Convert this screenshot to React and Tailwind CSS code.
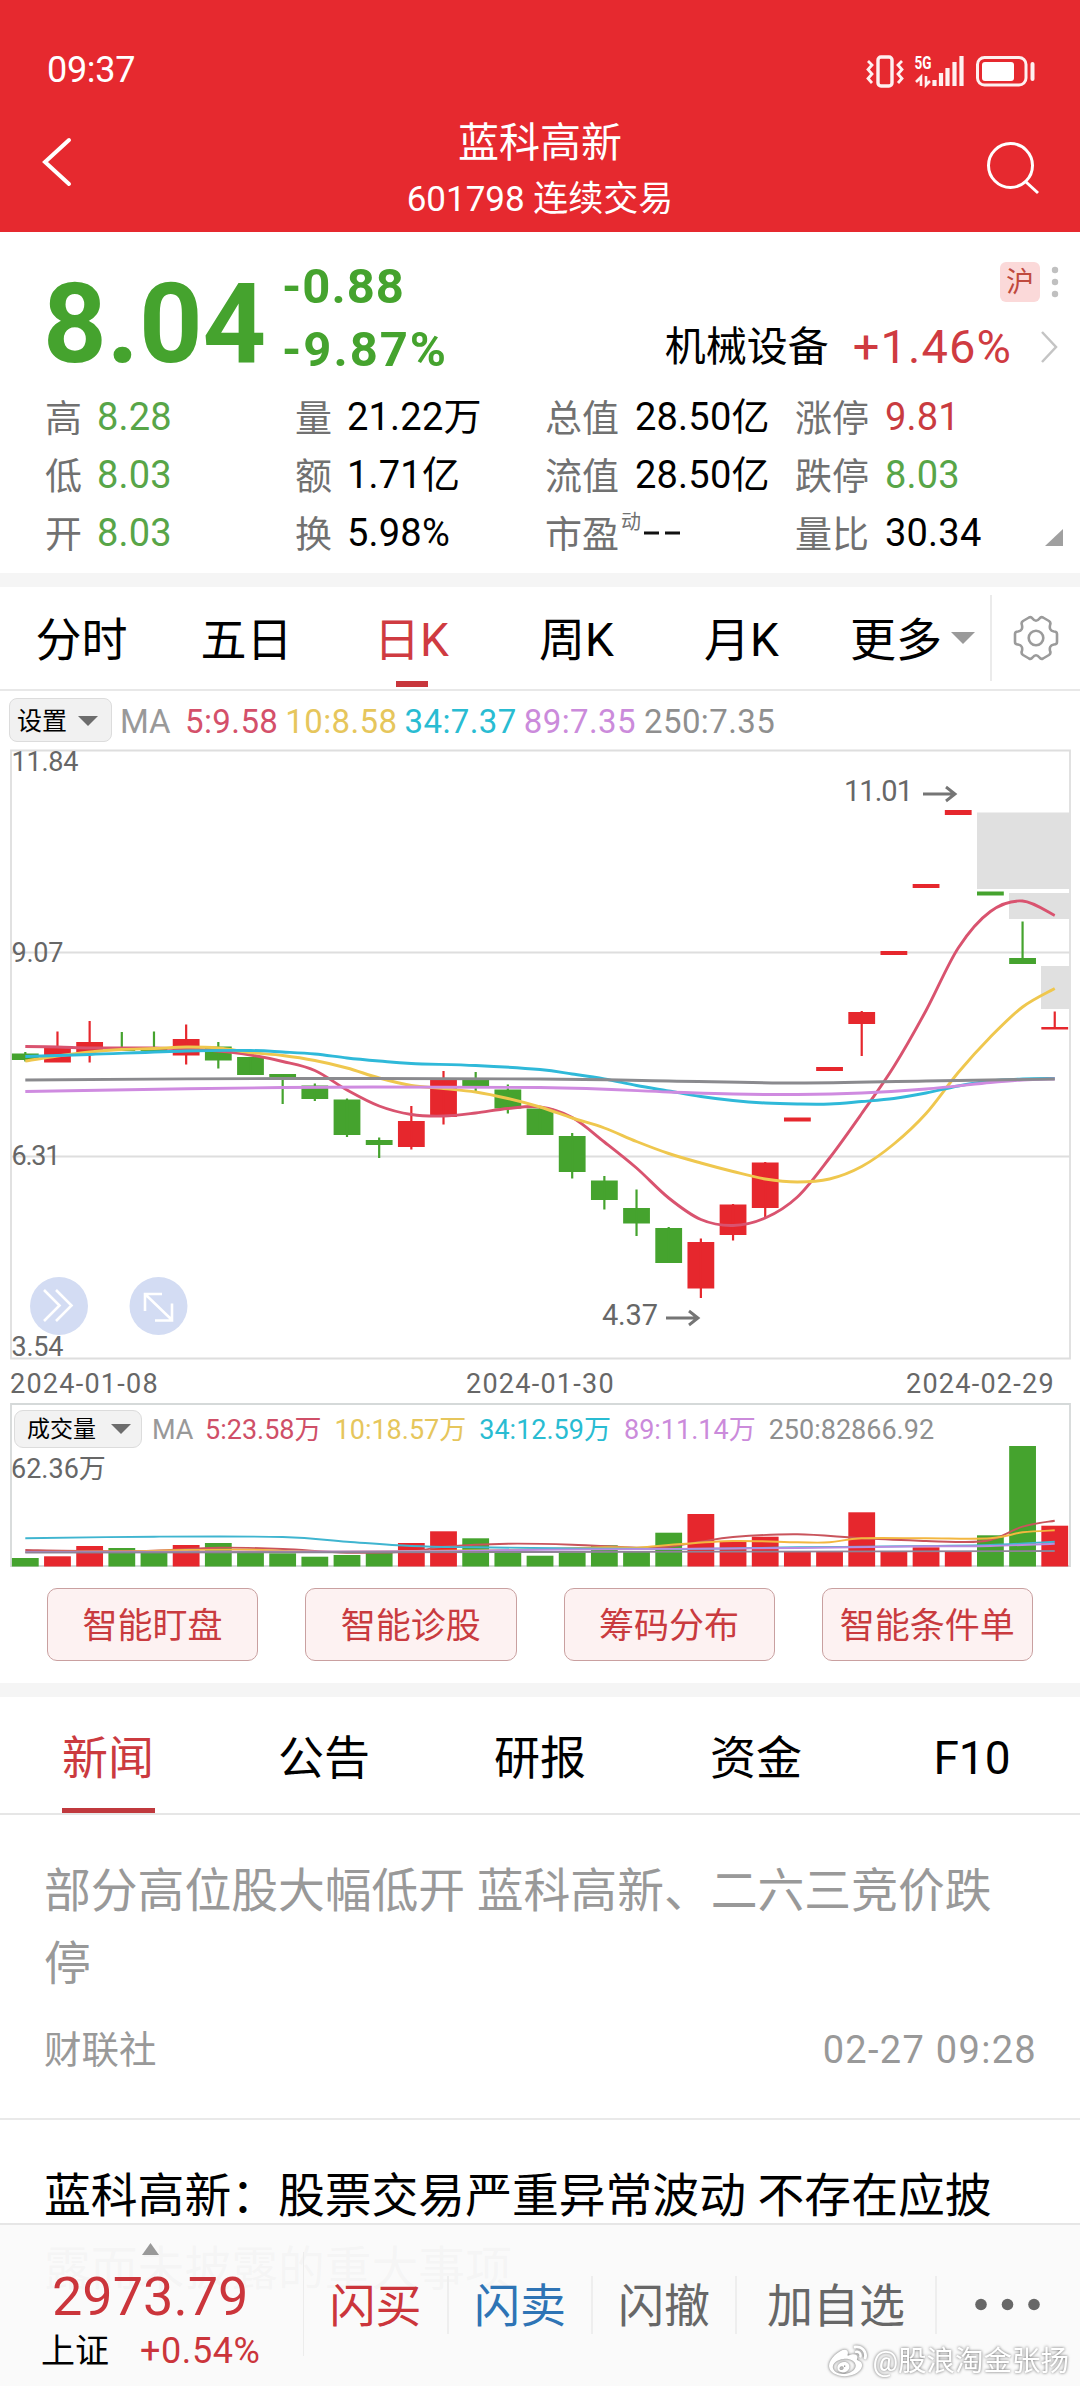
import React, { useState } from 'react';
import { FaWeibo } from 'react-icons/fa';

const RED = '#e6272d';
const GREEN = '#45a32e';
const FONT = 'font-[Roboto,"Noto_Sans_CJK_SC",sans-serif]';

// t: r = sube, g = baja; o/c = cuerpo, h/l = mecha, v = tope de la barra de volumen
const velas = [
  { t: 'g', o: 1053.5, c: 1060, h: 1052, l: 1061.5, v: 1558 },
  { t: 'r', o: 1047, c: 1062.5, h: 1031.5, l: 1062, v: 1556.3 },
  { t: 'r', o: 1042, c: 1052, h: 1021, l: 1062.5, v: 1546 },
  { t: 'g', o: 1048.5, c: 1051, h: 1032, l: 1050, v: 1548 },
  { t: 'g', o: 1048.5, c: 1051, h: 1031.5, l: 1050, v: 1552 },
  { t: 'r', o: 1039, c: 1055.5, h: 1024.5, l: 1064.5, v: 1545 },
  { t: 'g', o: 1046.5, c: 1060.5, h: 1042, l: 1068.5, v: 1543 },
  { t: 'g', o: 1057, c: 1075, h: 1057, l: 1075, v: 1552 },
  { t: 'g', o: 1074, c: 1077.5, h: 1074, l: 1104, v: 1553.3 },
  { t: 'g', o: 1085.5, c: 1099, h: 1083.5, l: 1101, v: 1556.7 },
  { t: 'g', o: 1099.5, c: 1135, h: 1098.5, l: 1137, v: 1555 },
  { t: 'g', o: 1140, c: 1145, h: 1137.5, l: 1158, v: 1552.7 },
  { t: 'r', o: 1121, c: 1147, h: 1106, l: 1149.5, v: 1543 },
  { t: 'r', o: 1079, c: 1117, h: 1071, l: 1124.5, v: 1531.3 },
  { t: 'g', o: 1079, c: 1086, h: 1072, l: 1091, v: 1538.3 },
  { t: 'g', o: 1089.5, c: 1108.5, h: 1084.5, l: 1113.5, v: 1551.3 },
  { t: 'g', o: 1108.5, c: 1135, h: 1108, l: 1135, v: 1555.7 },
  { t: 'g', o: 1136, c: 1172, h: 1133, l: 1178.5, v: 1552.3 },
  { t: 'g', o: 1180.5, c: 1200, h: 1176, l: 1209.5, v: 1545.3 },
  { t: 'g', o: 1208, c: 1223.5, h: 1189.5, l: 1236, v: 1551.7 },
  { t: 'g', o: 1228, c: 1263, h: 1227, l: 1263, v: 1532.7 },
  { t: 'r', o: 1242, c: 1288.5, h: 1238.5, l: 1298, v: 1514 },
  { t: 'r', o: 1204.5, c: 1235, h: 1204, l: 1240.5, v: 1541 },
  { t: 'r', o: 1162.5, c: 1208, h: 1162, l: 1217.5, v: 1536.7 },
  { t: 'r', o: 1117.5, c: 1121.5, h: 1118, l: 1121, v: 1551 },
  { t: 'r', o: 1067, c: 1071, h: 1067, l: 1071, v: 1551.7 },
  { t: 'r', o: 1012, c: 1024, h: 1011, l: 1056, v: 1512.3 },
  { t: 'r', o: 951, c: 955, h: 951, l: 955, v: 1551.7 },
  { t: 'r', o: 884, c: 888, h: 884, l: 888, v: 1547.3 },
  { t: 'r', o: 810, c: 815, h: 810, l: 815, v: 1551.7 },
  { t: 'g', o: 891.5, c: 895.5, h: 892, l: 895, v: 1535.3 },
  { t: 'g', o: 958, c: 964, h: 921.5, l: 964, v: 1446 },
  { t: 'r', o: 1027, c: 1029.5, h: 1011.5, l: 1029, v: 1525.7 },
];

const serie = (ys) => ys.map((y, i) => [i, y]);

const lineasPrecio = [
  { color: '#d9536f', pts: serie([1046.5, 1047, 1048, 1048, 1048, 1049, 1051, 1055, 1061.5, 1070.5, 1090, 1106, 1114.5, 1116, 1113, 1108.5, 1107, 1117.5, 1142, 1168, 1198, 1219.5, 1225.5, 1218, 1197, 1158, 1113.5, 1066.5, 1010.5, 948, 911.5, 901, 915.5]) },
  { color: '#efc74e', pts: serie([1061, 1056, 1052, 1049.5, 1048.5, 1047, 1048, 1052.5, 1055.5, 1060.5, 1068, 1078, 1085.5, 1088.5, 1092, 1098.5, 1107, 1118, 1128, 1141.5, 1153.5, 1163, 1171.5, 1179, 1182, 1179, 1166.5, 1144, 1113.5, 1072.5, 1037, 1007, 988.5]) },
  { color: '#2fb9d9', pts: [[0, 1056.5], [2, 1054.5], [5, 1051], [7, 1050.5], [8, 1052], [9, 1054], [10, 1058], [11, 1061], [12, 1063.5], [14, 1065.5], [16, 1069.5], [17, 1074], [18, 1079], [19, 1085.5], [20, 1091], [21, 1096.5], [22, 1100.5], [23, 1103], [24, 1104], [25, 1104], [26, 1101.5], [27, 1098.5], [28, 1093], [29, 1086], [30, 1081], [31, 1079], [32, 1078.5]] },
  { color: '#cf8be0', pts: [[0, 1091.5], [8, 1087.5], [16, 1087.5], [20, 1092], [22, 1094], [24, 1094.5], [26, 1093], [28, 1089], [30, 1082.5], [31, 1080], [32, 1079]] },
  { color: '#8a8a8e', pts: [[0, 1080], [8, 1078.5], [16, 1079], [20, 1081], [24, 1083], [28, 1081], [32, 1079]] },
];

const lineasVolumen = [
  { color: '#c9545c', pts: [[0, 1550], [2, 1551], [4, 1550.7], [6, 1547.7], [8, 1549], [10, 1552.7], [12, 1551.5], [13, 1546.7], [15, 1543.7], [17, 1544.7], [19, 1547.7], [20, 1546.7], [21, 1541.7], [22, 1537], [24, 1534.3], [26, 1538.3], [28, 1541], [29, 1542], [30, 1540], [31, 1526.7], [32, 1520.7]] },
  { color: '#f3b740', pts: [[0, 1552], [3, 1551.5], [5, 1550], [7, 1549.7], [9, 1551.7], [13, 1550.7], [15, 1550], [18, 1547.3], [19, 1547.7], [20, 1545], [22, 1541], [24, 1542.3], [25, 1542.3], [26, 1538.3], [28, 1538.3], [30, 1538.3], [31, 1532.3], [32, 1530.3]] },
  { color: '#3fb5d0', pts: [[0, 1538.3], [4, 1536.7], [8, 1537], [10, 1541.7], [12, 1546], [14, 1547.3], [20, 1549], [24, 1547.3], [28, 1546], [30, 1545], [32, 1541.7]] },
  { color: '#b98be0', pts: [[0, 1552], [12, 1551.3], [16, 1549.7], [24, 1548], [28, 1546.3], [30, 1546], [32, 1543.7]] },
  { color: '#8f8296', pts: [[0, 1552.5], [16, 1552], [32, 1551]] },
];

const px = (i) => 25.3 + i * 32.17;

// Curva suave que pasa por todos los puntos
function curva(pts) {
  const p = pts.map(([i, y]) => [px(i), y]);
  let d = `M${p[0][0]},${p[0][1]}`;
  for (let i = 0; i < p.length - 1; i++) {
    const a = p[i - 1] || p[i];
    const b = p[i];
    const c = p[i + 1];
    const e = p[i + 2] || c;
    d += `C${b[0] + (c[0] - a[0]) / 6},${b[1] + (c[1] - a[1]) / 6} ${c[0] - (e[0] - b[0]) / 6},${c[1] - (e[1] - b[1]) / 6} ${c[0]},${c[1]}`;
  }
  return d;
}

const datos = [
  [['高', '8.28', 'text-[#58a548]'], ['量', '21.22万', 'text-black'], ['总值', '28.50亿', 'text-black'], ['涨停', '9.81', 'text-[#c93b40]']],
  [['低', '8.03', 'text-[#58a548]'], ['额', '1.71亿', 'text-black'], ['流值', '28.50亿', 'text-black'], ['跌停', '8.03', 'text-[#58a548]']],
  [['开', '8.03', 'text-[#58a548]'], ['换', '5.98%', 'text-black'], ['市盈', '--', 'text-black'], ['量比', '30.34', 'text-black']],
];

const medias = [
  ['5:9.58', 'text-[#d4506a] ml-[15px]'],
  ['10:8.58', 'text-[#e6c65c] ml-[7px]'],
  ['34:7.37', 'text-[#29bcd2] ml-[7px]'],
  ['89:7.35', 'text-[#cb8bdb] ml-[7px]'],
  ['250:7.35', 'text-[#8f8f8f] ml-[8px]'],
];

const mediasVolumen = [
  ['5:23.58万', 'text-[#cf4f68]'],
  ['10:18.57万', 'text-[#e6c65c]'],
  ['34:12.59万', 'text-[#29bcd2]'],
  ['89:11.14万', 'text-[#cb8bdb]'],
  ['250:82866.92', 'text-[#8f8f8f]'],
];

function BarraEstado() {
  return (
    <div className="flex h-[112px] items-end justify-between pl-[47px] pr-[44px] pb-[20px]">
      <span className="text-[36px] leading-[43px] tracking-[-0.3px]">09:37</span>
      <svg className="h-[40px] w-[170px]" viewBox="866 50 170 40" fill="none" stroke="#fff" strokeOpacity="0.93">
        <rect x="878" y="55" width="14" height="29" rx="3" strokeWidth="3.4" />
        <path d="M868 59l4 4-4 4.500 4 4.500-4 4.500 4 4.500M902 59l-4 4 4 4.500-4 4.500 4 4.500-4 4.500" strokeWidth="2.800" />
        <text x="914.500" y="67" fontSize="17.500" fontWeight="700" fill="#fff" stroke="none" textLength="17" lengthAdjust="spacingAndGlyphs">5G</text>
        <path d="M921 84V75l-5 5M926 74v9l4-4" strokeWidth="2.600" />
        <path d="M934.500 84v-6M941 84v-13M947.500 84v-18M954.500 84v-24M961.500 84v-30" strokeWidth="4.200" />
        <rect x="977.500" y="55.500" width="48.500" height="27.500" rx="7" strokeWidth="3" />
        <rect x="982" y="60" width="32" height="19" rx="3" fill="#fff" stroke="none" />
        <path d="M1032.500 62v15" strokeWidth="4" strokeLinecap="round" />
      </svg>
    </div>
  );
}

function Cabecera() {
  return (
    <header className="h-[232px] bg-[#e6292f] text-white">
      <BarraEstado />
      <div className="flex h-[120px] justify-between">
        <svg className="h-[60px] w-[40px] ml-[38px] mt-[19px]" viewBox="38 131 40 60" fill="none" stroke="#fff" strokeWidth="4">
          <path d="M69 140L45 162l24 22" strokeLinecap="round" />
        </svg>
        <div className="flex flex-col items-center ml-[18px]">
          <h1 className="mt-[6px] text-[41px] leading-[50px]">蓝科高新</h1>
          <p className="mt-[10px] text-[35px] leading-[44px]">601798 连续交易</p>
        </div>
        <svg className="h-[60px] w-[60px] mr-[36px] mt-[26px]" viewBox="984 138 60 60" fill="none" stroke="#fff" strokeWidth="3">
          <circle cx="1010.500" cy="165.500" r="22" />
          <path d="M1026 182l12 11" />
        </svg>
      </div>
    </header>
  );
}

function Cotizacion() {
  return (
    <section className="h-[341px] relative">
      <div className="flex h-[155px]">
        <div className="w-[236px] pl-[43px] pt-[37px] text-[111px] font-bold leading-[110px] text-[#45a32e]">8.04</div>
        <div className="pl-[46px] pt-[27px] text-[49px] font-bold text-[#45a32e]">
          <p className="leading-[56px] tracking-[1px]">-0.88</p>
          <p className="mt-[7px] leading-[56px] tracking-[2px]">-9.87%</p>
        </div>
        <div className="ml-auto flex flex-col items-end pr-[21px]">
          <div className="mt-[30px] flex items-center gap-[11px]">
            <span className="flex h-[40px] w-[40px] items-center justify-center rounded-[6px] bg-[#fbd9d9] pt-[2px] text-[28px] leading-none text-[#c04a3e]">沪</span>
            <svg className="h-[32px] w-[8px]" viewBox="0 0 8 32" fill="#c0c0c0">
              <circle cx="4" cy="4" r="3.200" />
              <circle cx="4" cy="16" r="3.200" />
              <circle cx="4" cy="28" r="3.200" />
            </svg>
          </div>
          <div className="mt-[17px] flex h-[56px] items-center">
            <span className="text-[41px] leading-[56px]">机械设备</span>
            <span className="ml-[24px] text-[47px] leading-[56px] tracking-[1.1px] text-[#cf3b41]">+1.46%</span>
            <svg className="ml-[27px] h-[34px] w-[20px]" viewBox="0 0 20 34" fill="none" stroke="#c4c4c4" strokeWidth="2.500">
              <path d="M3 2l14 15L3 32" />
            </svg>
          </div>
        </div>
      </div>
      <div className="flex flex-col pt-[2px]">
        {datos.map((fila, n) => (
          <div key={n} className="flex h-[58px] pl-[45px]">
            {fila.map(([nombre, valor, color], k) => (
              <div key={nombre} className="flex w-[250px] items-center whitespace-nowrap">
                <span className="mt-[4px] text-[37px] leading-[44px] text-[#717171]">{nombre}</span>
                {nombre === '市盈' ? (
                  <>
                    <span className="ml-[2px] mb-[24px] text-[20px] leading-none text-[#717171]">动</span>
                    <svg className="ml-[3px] mb-[2px] h-[4px] w-[36px]" viewBox="0 0 36 4">
                      <path d="M0 2h15M21 2h15" stroke="#111" strokeWidth="3" />
                    </svg>
                  </>
                ) : (
                  <span className={`mb-[3px] text-[38px] leading-[44px] tracking-[0.2px] ${color} ${k > 1 ? 'ml-[16px]' : 'ml-[15px]'}`}>{valor}</span>
                )}
              </div>
            ))}
          </div>
        ))}
      </div>
      <svg className="absolute right-[17px] bottom-[27px] h-[17px] w-[18px]" viewBox="0 0 18 17" fill="#a0a0a0">
        <path d="M18 0v17H0z" />
      </svg>
    </section>
  );
}

function Periodos() {
  const [activo, setActivo] = useState('日K');
  return (
    <nav className="flex h-[104px] border-b-2 border-[#e8e8e8]">
      {['分时', '五日', '日K', '周K', '月K'].map((p) => (
        <button
          key={p}
          onClick={() => setActivo(p)}
          className={`relative flex w-[165px] justify-center pt-[25px] pr-[2px] text-[46px] leading-[56px] ${activo === p ? 'text-[#cf3b41]' : 'text-black'}`}
        >
          {p}
          {activo === p && <span className="absolute bottom-[2px] h-[6px] w-[32px] bg-[#c8363c]" />}
        </button>
      ))}
      <button className="flex w-[165px] pl-[25px] pt-[25px] text-[46px] leading-[56px]">
        更多
        <svg className="ml-[9px] mt-[20px] h-[12px] w-[24px]" viewBox="0 0 24 12" fill="#9a9a9a">
          <path d="M0 0h24L12 12z" />
        </svg>
      </button>
      <div className="mt-[8px] flex h-[86px] flex-1 items-center justify-center border-l-2 border-[#ebebeb]">
        <svg className="h-[48px] w-[48px]" viewBox="-24 -24 48 48" fill="none" stroke="#9b9b9b" strokeWidth="2.600" strokeLinejoin="round">
          <path d="M-7-20.500Q-5-21.500-3.500-19.500Q0-15 3.500-19.500Q5-21.500 7-20.500L13-17Q15-15.500 14.200-13.500Q12.500-7.500 18-6.500Q21-6.500 21-4V4Q21 6.500 18 6.500Q12.500 7.500 14.200 13.500Q15 15.500 13 17L7 20.500Q5 21.500 3.500 19.500Q0 15-3.500 19.500Q-5 21.500-7 20.500L-13 17Q-15 15.500-14.200 13.500Q-12.500 7.500-18 6.500Q-21 6.500-21 4V-4Q-21-6.500-18-6.500Q-12.500-7.500-14.200-13.500Q-15-15.500-13-17Z" />
          <circle r="7.300" />
        </svg>
      </div>
    </nav>
  );
}

function GraficoVelas() {
  return (
    <svg className="block h-[612px] w-full overflow-visible" viewBox="0 749 1080 612" fontSize="27" fill="#676767">
      <path d="M11 750.500H1070V1358.500H11zM11 952.500H1070M11 1156.500H1070" fill="none" stroke="#dedede" strokeWidth="1.800" />
      <g fill="#e0e0e0">
        <rect x="977" y="812.500" width="93" height="76.500" />
        <rect x="1009" y="893" width="61" height="26" />
        <rect x="1041" y="966" width="29" height="43" />
      </g>
      <text x="11.500" y="771" textLength="67">11.84</text>
      <text x="11.500" y="962" textLength="52">9.07</text>
      <text x="11.500" y="1165" textLength="49">6.31</text>
      <text x="11.500" y="1356" textLength="52">3.54</text>
      {velas.map((v, i) => (
        <g key={i} fill={v.t === 'r' ? RED : GREEN}>
          <rect x={px(i) - 13.4} y={v.o} width="26.800" height={v.c - v.o} />
          <rect x={px(i) - 1.1} y={v.h} width="2.200" height={v.l - v.h} />
        </g>
      ))}
      {lineasPrecio.map((l) => (
        <path key={l.color} d={curva(l.pts)} fill="none" stroke={l.color} strokeWidth="2.900" />
      ))}
      <text x="844" y="801" fontSize="29" textLength="69">11.01</text>
      <text x="602" y="1325" fontSize="29" textLength="56">4.37</text>
      <path d="M923 794h31M946 787l9 7-9 7M666 1318h31M689 1311l9 7-9 7" fill="none" stroke="#757575" strokeWidth="2.900" />
      <g fill="#d3dcf3">
        <circle cx="59" cy="1306" r="29" />
        <circle cx="158.500" cy="1306" r="29" />
      </g>
      <path d="M44 1290l15.500 15.500L44 1321M56 1290l15.500 15.500L56 1321M145 1311v-17h17M146 1295l26 25M155 1320.500h17v-17" fill="none" stroke="#fff" strokeWidth="2.600" />
    </svg>
  );
}

function Volumen() {
  return (
    <section className="relative h-[163px]">
      <svg className="absolute inset-0 h-[164px] w-full" viewBox="0 1403 1080 164">
        <path d="M11 1404H1070V1566H11z" fill="none" stroke="#d5d9d9" strokeWidth="1.800" />
        {velas.map((v, i) => (
          <rect key={i} x={px(i) - 13.4} y={v.v} width="26.800" height={1566.5 - v.v} fill={v.t === 'r' ? RED : GREEN} />
        ))}
        {lineasVolumen.map((l) => (
          <path key={l.color} d={curva(l.pts)} fill="none" stroke={l.color} strokeWidth="1.900" />
        ))}
      </svg>
      <div className="relative flex items-center pl-[14px] pt-[5px] text-[27px] leading-[38px] whitespace-nowrap">
        <button className="flex h-[38px] w-[128px] items-center rounded-[9px] border border-[#dcdcdc] bg-[#f2f2f2] pl-[12px] pt-px text-[23px] leading-none">
          成交量
          <svg className="ml-[15px] h-[10px] w-[20px]" viewBox="0 0 20 10" fill="#6d6d6d">
            <path d="M0 0h20L10 10z" />
          </svg>
        </button>
        <span className="ml-[10px] mr-[12px] w-[41px] pt-[3px] text-[#999]">MA</span>
        <div className="flex gap-[13px] pt-[3px]">
          {mediasVolumen.map(([texto, color]) => (
            <span key={texto} className={color}>{texto}</span>
          ))}
        </div>
      </div>
      <p className="relative pl-[11px] text-[27px] leading-[40px] text-[#676767]">62.36万</p>
    </section>
  );
}

function Noticias() {
  const [tab, setTab] = useState('新闻');
  return (
    <section>
      <nav className="flex h-[118px] border-b-2 border-[#e6e6e6]">
        {['新闻', '公告', '研报', '资金', 'F10'].map((t) => (
          <button
            key={t}
            onClick={() => setTab(t)}
            className={`relative flex w-[216px] justify-center pt-[33px] text-[46px] leading-[56px] ${tab === t ? 'text-[#cb3a3f]' : 'text-black'}`}
          >
            {t}
            {tab === t && <span className="absolute bottom-0 h-[5px] w-[93px] bg-[#c0393e]" />}
          </button>
        ))}
      </nav>
      <article className="h-[305px] border-b-2 border-[#e9e9e9] pl-[44px] pr-[43px] pt-[40px] text-[#999]">
        <h2 className="text-[46.8px] leading-[73px]">部分高位股大幅低开 蓝科高新、二六三竞价跌停</h2>
        <div className="mt-[24px] flex items-center justify-between leading-[50px]">
          <span className="text-[37.5px]">财联社</span>
          <span className="text-[38px] tracking-[1.3px]">02-27 09:28</span>
        </div>
      </article>
      <article className="pl-[44px] pr-[43px] pt-[40px]">
        <h2 className="text-[46.8px] leading-[73px]">蓝科高新：股票交易严重异常波动 不存在应披露而未披露的重大事项</h2>
      </article>
    </section>
  );
}

function BarraInferior() {
  return (
    <footer className="absolute inset-x-0 bottom-0 flex h-[163px] border-t-2 border-[#e6e6e6] bg-[#fafafa]/98">
      <div className="flex w-[303px] flex-col">
        <svg className="ml-[142px] mt-[18px] h-[12px] w-[17px]" viewBox="0 0 17 12" fill="#999">
          <path d="M8.500 0L17 12H0z" />
        </svg>
        <p className="mt-[12px] pl-[52px] text-[54px] leading-[60px] text-[#cb353b]">2973.79</p>
        <p className="mt-[1px] flex items-center pl-[41px] leading-[46px]">
          <span className="text-[34px]">上证</span>
          <span className="ml-[31px] text-[36px] tracking-[0.6px] text-[#cb353b]">+0.54%</span>
        </p>
      </div>
      <div className="mt-[27px] h-[104px] w-px bg-[#ececec]" />
      <div className="flex h-[58px] mt-[51px] flex-1 text-[46px] leading-[60px] text-[#676767]">
        <button className="w-[145px] border-r-2 border-[#eeeeee] text-[#cb353b]">闪买</button>
        <button className="w-[144px] border-r-2 border-[#eeeeee] text-[#2e74b5]">闪卖</button>
        <button className="w-[144px] border-r-2 border-[#eeeeee]">闪撤</button>
        <button className="w-[200px] border-r-2 border-[#eeeeee]">加自选</button>
        <svg className="ml-[38px] h-[58px] w-[66px]" viewBox="0 0 66 58" fill="#676767">
          <circle cx="6" cy="28.500" r="5.800" />
          <circle cx="32.500" cy="28.500" r="5.800" />
          <circle cx="59" cy="28.500" r="5.800" />
        </svg>
      </div>
      <div className="absolute right-[11px] bottom-[4px] flex items-center gap-[5px] text-[28.5px] leading-[40px] text-white [filter:drop-shadow(0_0_1.5px_rgba(0,0,0,0.6))]">
        <FaWeibo className="h-[38px] w-[38px]" />
        <span>@股浪淘金张扬</span>
      </div>
    </footer>
  );
}

export default function App() {
  return (
    <div className={`${FONT} relative h-[2386px] w-[1080px] overflow-hidden bg-white text-black`}>
      <Cabecera />
      <Cotizacion />
      <div className="h-[14px] bg-[#f5f5f5]" />
      <Periodos />
      <div className="flex h-[58px] items-center pl-[9px] text-[33px] leading-[44px] text-[#999]">
        <button className="flex h-[44px] w-[103px] items-center rounded-[8px] border border-[#dcdcdc] bg-[#f1f1f1] pl-[7px] pt-[2px] text-[25px] leading-none text-black">
          设置
          <svg className="ml-[11px] h-[10px] w-[20px]" viewBox="0 0 20 10" fill="#6d6d6d">
            <path d="M0 0h20L10 10z" />
          </svg>
        </button>
        <span className="ml-[8px] mt-[3px] w-[50px]">MA</span>
        {medias.map(([texto, color]) => (
          <span key={texto} className={`mt-[3px] tracking-[0.4px] ${color}`}>{texto}</span>
        ))}
      </div>
      <GraficoVelas />
      <div className="flex h-[42px] items-center pl-[10px] pt-[3px] text-[27px] leading-[42px] tracking-[1.25px] text-[#676767]">
        <span className="w-[456px]">2024-01-08</span>
        <span className="w-[440px]">2024-01-30</span>
        <span>2024-02-29</span>
      </div>
      <Volumen />
      <div className="flex h-[117px] gap-[47px] px-[47px] pt-[22px]">
        {['智能盯盘', '智能诊股', '筹码分布', '智能条件单'].map((b) => (
          <button key={b} className="h-[73px] flex-1 rounded-[10px] border border-[#c9a0a0] bg-[#fdf2f2] pt-[3px] text-[35px] leading-none whitespace-nowrap text-[#c93b3f]">
            {b}
          </button>
        ))}
      </div>
      <div className="h-[14px] bg-[#f5f5f5]" />
      <Noticias />
      <BarraInferior />
    </div>
  );
}
